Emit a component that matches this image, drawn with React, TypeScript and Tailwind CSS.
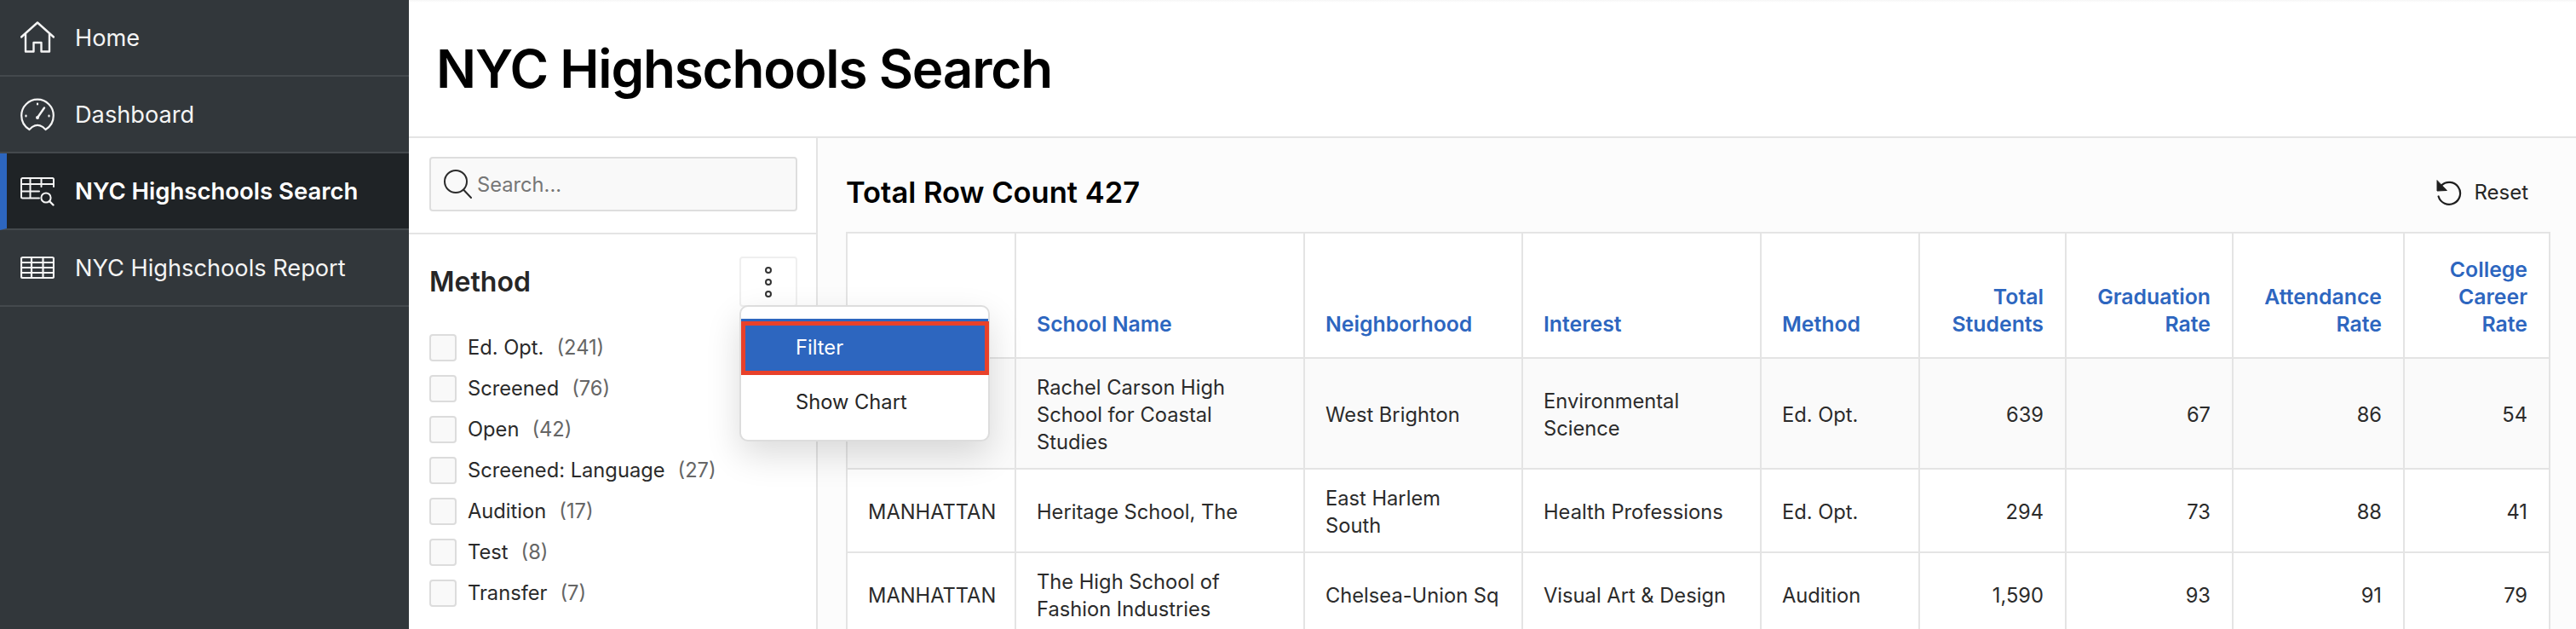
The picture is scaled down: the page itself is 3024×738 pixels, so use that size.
import React from "react";

const navIcon = "shrink-0 text-[#f4f4f4]";

function HomeIcon() {
  return (
    <svg width="40" height="40" viewBox="0 0 40 40" fill="none" stroke="currentColor" strokeWidth="2.4" strokeLinejoin="round" strokeLinecap="round" className={navIcon}>
      <path d="M1 19.500 20 2.500l19 17" />
      <path d="M6 16v20.500h9.500V26h9v10.500h9.500V16" />
    </svg>
  );
}
function GaugeIcon() {
  return (
    <svg width="40" height="40" viewBox="0 0 40 40" fill="none" stroke="currentColor" strokeWidth="2.2" strokeLinecap="round" strokeLinejoin="round" className={navIcon}>
      <path d="M10.500 38C4.800 34.500 1.200 28.500 1.200 21.500a18.800 18.800 0 0 1 37.600 0c0 7-3.600 13-9.300 16.500l-3.500-3.200c-3.700-2.400-8.300-2.400-12 0z" />
      <path d="M20 24l8-11.500" strokeWidth="2.400" />
      <circle cx="20" cy="24" r="2" fill="currentColor" stroke="none" />
      <path d="M20 7.500v1M6.500 21.500v1M33.500 21.500v1" />
    </svg>
  );
}
function TableSearchIcon() {
  return (
    <svg width="40" height="40" viewBox="0 0 40 40" fill="none" stroke="currentColor" strokeWidth="2" strokeLinecap="round" className={navIcon}>
      <path d="M22 28.500H2.500a1.500 1.500 0 0 1-1.500-1.500V6.500A1.500 1.500 0 0 1 2.500 5h35A1.500 1.500 0 0 1 39 6.500V15" />
      <path d="M1 12h38M1 20.500h21M11.500 5v23M24.500 5v10" />
      <circle cx="30" cy="28" r="5.600" />
      <path d="M34 32l4.500 4.500" strokeWidth="2.400" />
    </svg>
  );
}
function TableIcon() {
  return (
    <svg width="40" height="40" viewBox="0 0 40 40" fill="none" stroke="currentColor" strokeWidth="2.200" className={navIcon}>
      <rect x="1" y="8" width="38" height="24" rx="1.500" />
      <path d="M1 14h38M1 20h38M1 26h38M13 8v24M26.500 8v24" />
    </svg>
  );
}

const navItems = [
  { label: "Home", icon: <HomeIcon /> },
  { label: "Dashboard", icon: <GaugeIcon /> },
  { label: "NYC Highschools Search", icon: <TableSearchIcon />, active: true },
  { label: "NYC Highschools Report", icon: <TableIcon /> },
];

const facets: [string, string][] = [
  ["Ed. Opt.", "(241)"],
  ["Screened", "(76)"],
  ["Open", "(42)"],
  ["Screened: Language", "(27)"],
  ["Audition", "(17)"],
  ["Test", "(8)"],
  ["Transfer", "(7)"],
];

const rows: React.ReactNode[][] = [
  ["", "Rachel Carson High School for Coastal Studies", "West Brighton", "Environmental Science", "Ed. Opt.", "639", "67", "86", "54"],
  ["MANHATTAN", "Heritage School, The", <>East Harlem<br />South</>, "Health Professions", "Ed. Opt.", "294", "73", "88", "41"],
  ["MANHATTAN", "The High School of Fashion Industries", "Chelsea-Union Sq", "Visual Art & Design", "Audition", "1,590", "93", "91", "79"],
];

const headers: [string, boolean][] = [
  ["", false],
  ["School Name", false],
  ["Neighborhood", false],
  ["Interest", false],
  ["Method", false],
  ["Total Students", true],
  ["Graduation Rate", true],
  ["Attendance Rate", true],
  ["College Career Rate", true],
];

const widths = ["w-[198px]", "w-[339px]", "w-[256px]", "w-[280px]", "w-[186px]", "w-[172px]", "w-[196px]", "w-[201px]", "w-[171px]"];

export default function App() {
  return (
    <div className="flex h-[738px] w-[3024px] overflow-hidden bg-white text-[#262626] font-['Inter',sans-serif]">
      <aside className="w-[480px] shrink-0 bg-[#32373b]">
        {navItems.map((n) => (
          <div
            key={n.label}
            className={
              n.active
                ? "flex h-[90px] items-center gap-[24px] border-b-2 border-[#44494d] border-l-[8px] border-l-[#2d66bf] bg-[#1f2326] pl-[16px] text-[27.5px] font-semibold text-white"
                : "flex h-[90px] items-center gap-[24px] border-b-2 border-[#44494d] pl-[24px] text-[27.2px] text-[#f4f4f4]"
            }
          >
            {n.icon}
            <span className="pt-[2px]">{n.label}</span>
          </div>
        ))}
      </aside>

      <main className="flex min-w-0 flex-1 flex-col">
        <header className="flex h-[162px] shrink-0 items-center border-b-2 border-[#e4e4e4] bg-gradient-to-b from-[#f6f6f6] to-white to-[3px] pl-[32px] pt-[2px]">
          <h1 className="text-[62px] font-semibold leading-none tracking-[-1.2px] text-black">NYC Highschools Search</h1>
        </header>

        <div className="flex min-h-0 flex-1">
          <section className="relative w-[480px] shrink-0 border-r-2 border-[#e4e4e4] bg-white">
            <div className="border-b-2 border-[#e4e4e4] px-[24px] pb-[25px] pt-[22px]">
              <div className="flex h-[64px] w-[432px] items-center gap-[6px] rounded-[4px] border-2 border-[#dedede] bg-[#f9f9f9] pl-[14px]">
                <svg width="34" height="36" viewBox="0 0 34 36" fill="none" stroke="#2b2b2b" strokeWidth="2" strokeLinecap="round">
                  <circle cx="15" cy="15" r="13" />
                  <path d="M24.500 25 33 34" />
                </svg>
                <span className="pt-[2px] text-[23.7px] text-[#767676]">Search...</span>
              </div>
            </div>

            <div className="flex items-center justify-between pl-[24px] pr-[22px] pt-[26px]">
              <h2 className="text-[32px] font-semibold text-[#262626]">Method</h2>
              <div className="flex h-[59px] w-[68px] flex-col items-center justify-center gap-[6px] rounded-[4px] border-2 border-[#efefef] bg-white">
                <span className="h-[8px] w-[8px] rounded-full border-2 border-[#333]" />
                <span className="h-[8px] w-[8px] rounded-full border-2 border-[#333]" />
                <span className="h-[8px] w-[8px] rounded-full border-2 border-[#333]" />
              </div>
            </div>

            <ul className="flex flex-col gap-[16px] pl-[24px] pt-[32px]">
              {facets.map(([l, c]) => (
                <li key={l} className="flex h-[32px] items-center gap-[13px] text-[23.7px]">
                  <span className="h-[32px] w-[32px] shrink-0 rounded-[4px] border-2 border-[#dcdcdc] bg-[#f9f9f9]" />
                  <span className="text-[#2a2a2a]">{l}</span>
                  <span className="ml-[2px] text-[#666]">{c}</span>
                </li>
              ))}
            </ul>
            <div className="pl-[24px] pt-[26px] text-[24px] text-[#2d66bf]">Show All</div>
          </section>

          <section className="min-w-0 flex-1 bg-[#fcfcfc] pl-[33px]">
            <div className="flex h-[110px] w-[1999px] items-center justify-between pt-[18px]">
              <h3 className="text-[34.5px] font-semibold leading-none text-black">Total Row Count 427</h3>
              <div className="flex items-center gap-[14px] pr-[24px] text-[24px] text-[#262626]">
                <svg width="30" height="30" viewBox="0 0 30 30" fill="none" stroke="#1f1f1f" strokeWidth="2.200" strokeLinecap="round" strokeLinejoin="round">
                  <path d="M1 1v12l11-.5z" fill="#1f1f1f" strokeWidth="1" />
                  <path d="M6 6.500A13 13 0 1 1 2.600 19.500" />
                </svg>
                <span>Reset</span>
              </div>
            </div>

            <table className="w-[1999px] table-fixed border-collapse bg-white text-[23.7px] leading-[32px] text-[#2b2b2b]">
              <thead>
                <tr className="h-[147px]">
                  {headers.map(([h, right], i) => (
                    <th
                      key={i}
                      className={`${widths[i]} border-2 border-[#e4e4e4] pl-[24px] pb-[23px] align-bottom text-[24.8px] font-semibold text-[#2d66bf] ${right ? "pr-[25px] text-right" : "pr-[20px] text-left"}`}
                    >
                      {h}
                    </th>
                  ))}
                </tr>
              </thead>
              <tbody>
                {rows.map((r, ri) => (
                  <tr key={ri} className={ri === 0 ? "bg-[#fafafa]" : "bg-white"}>
                    {r.map((c, i) => (
                      <td key={i} className={`border-2 border-[#e4e4e4] pb-[14px] pl-[24px] pt-[18px] align-middle ${i >= 5 ? "pr-[25px] text-right" : "pr-[20px] text-left"}`}>
                        {c}
                      </td>
                    ))}
                  </tr>
                ))}
              </tbody>
            </table>
          </section>
        </div>
      </main>

      <div className="absolute left-[868px] top-[358px] h-[160px] w-[294px] rounded-[10px] border-2 border-[#dddddd] bg-white text-[23.7px] shadow-[0_16px_40px_rgba(0,0,0,0.14)]">
        <div className="relative mt-[14px] flex h-[66px] items-center bg-[#2d66bf] pl-[64px] pt-[2px] text-white">
          <span className="absolute inset-x-0 -right-px bottom-0 top-[3px] border-[5px] border-[#e8412a]" />
          <span className="relative">Filter</span>
        </div>
        <div className="flex h-[64px] items-center pl-[64px] text-[#262626]">Show Chart</div>
      </div>
    </div>
  );
}
